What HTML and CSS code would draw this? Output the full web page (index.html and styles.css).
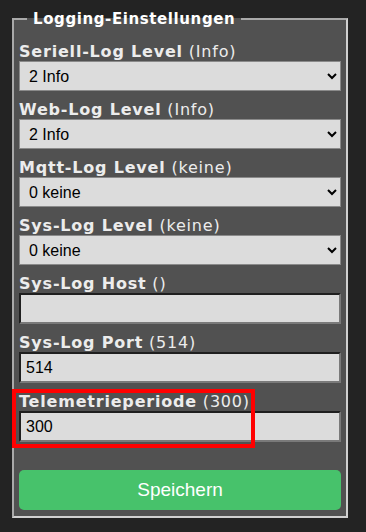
FILE: index.html
```html
<!DOCTYPE html>
<html lang="de">
<head>
    <meta charset="UTF-8">
    <meta name="viewport" content="width=device-width, initial-scale=1.0">
    <title>Logging-Einstellungen</title>
    <link rel="stylesheet" href="styles.css">
</head>
<body>
    <div class="page">
        <fieldset class="settings">
            <legend>Logging-Einstellungen</legend>

            <div class="field">
                <label for="serial-log"><b>Seriell-Log Level</b> (Info)</label>
                <select id="serial-log" class="select-field">
                    <option>0 keine</option>
                    <option>1 Fehler</option>
                    <option selected>2 Info</option>
                </select>
            </div>

            <div class="field">
                <label for="web-log"><b>Web-Log Level</b> (Info)</label>
                <select id="web-log" class="select-field">
                    <option>0 keine</option>
                    <option>1 Fehler</option>
                    <option selected>2 Info</option>
                </select>
            </div>

            <div class="field">
                <label for="mqtt-log"><b>Mqtt-Log Level</b> (keine)</label>
                <select id="mqtt-log" class="select-field">
                    <option selected>0 keine</option>
                    <option>1 Fehler</option>
                    <option>2 Info</option>
                </select>
            </div>

            <div class="field">
                <label for="sys-log"><b>Sys-Log Level</b> (keine)</label>
                <select id="sys-log" class="select-field">
                    <option selected>0 keine</option>
                    <option>1 Fehler</option>
                    <option>2 Info</option>
                </select>
            </div>

            <div class="field">
                <label for="sys-host"><b>Sys-Log Host</b> ()</label>
                <input type="text" id="sys-host" class="input-field" value="">
            </div>

            <div class="field">
                <label for="sys-port"><b>Sys-Log Port</b> (514)</label>
                <input type="text" id="sys-port" class="input-field" value="514">
            </div>

            <div class="field">
                <label for="telemetry"><b>Telemetrieperiode</b> (300)</label>
                <input type="text" id="telemetry" class="input-field" value="300">
                <span class="highlight"></span>
            </div>

            <button class="btn save">Speichern</button>
        </fieldset>
    </div>
</body>
</html>
```

FILE: styles.css
```css
* {
    box-sizing: border-box;
    margin: 0;
    padding: 0;
}

body {
    background-color: #232323;
    font-family: "DejaVu Sans", Verdana, sans-serif;
}

.page {
    padding: 10px 18px 0 12px;
}

.settings {
    background-color: #515151;
    border: 2px solid;
    border-color: #a9a9a9 #d0d0d0 #d0d0d0 #a9a9a9;
    padding: 0 5px 6px 5px;
}

legend {
    color: #fff;
    font-weight: bold;
    font-size: 15px;
    line-height: 18px;
    letter-spacing: 0.6px;
    margin-left: 8px;
    padding: 0 6px 0 6px;
}

.field {
    position: relative;
}

.field label {
    display: block;
    color: #ececec;
    font-size: 16px;
    line-height: 18px;
    letter-spacing: 0.8px;
    margin-top: 10px;
}

.field:first-of-type label {
    margin-top: 15px;
}

.select-field, .input-field {
    display: block;
    width: 100%;
    font-family: "Liberation Sans", Arial, sans-serif;
    font-size: 16px;
    color: #000;
    background-color: #dcdcdc;
}

.select-field {
    height: 30px;
    border: 1px solid #8a8a8a;
    padding: 0 5px;
}

.input-field {
    height: 31px;
    border: 2px solid;
    border-color: #1f1f1f #7a7a7a #7a7a7a #1f1f1f;
    padding: 0 5px;
}

.highlight {
    position: absolute;
    top: -4px;
    left: -7px;
    width: 243px;
    height: 59px;
    border: 4px solid #ff0000;
}

.btn {
    display: block;
    width: 100%;
    height: 40px;
    margin-top: 28px;
    border: none;
    border-radius: 5px;
    color: #fff;
    font-family: "Liberation Sans", Arial, sans-serif;
    font-size: 19px;
    cursor: pointer;
}

.save { background-color: #47c26b; }
```
